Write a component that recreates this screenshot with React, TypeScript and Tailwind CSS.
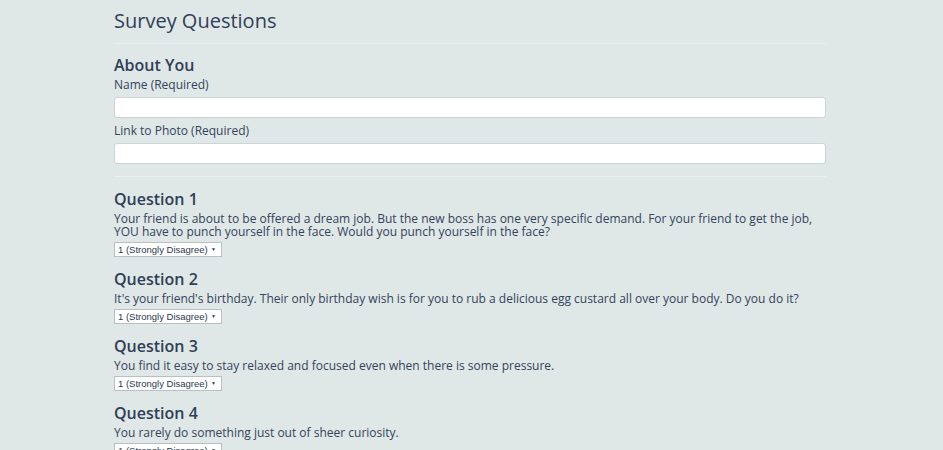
import React from "react";

const questions = [
  "Your friend is about to be offered a dream job. But the new boss has one very specific demand. For your friend to get the job, YOU have to punch yourself in the face. Would you punch yourself in the face?",
  "It's your friend's birthday. Their only birthday wish is for you to rub a delicious egg custard all over your body. Do you do it?",
  "You find it easy to stay relaxed and focused even when there is some pressure.",
  "You rarely do something just out of sheer curiosity.",
];

function Choice() {
  return (
    <div className="relative mt-[4px] w-[108px] h-[15px]">
      <select className="appearance-none block w-full h-full bg-white border border-[#b9bfc4] pl-[3px] font-['Liberation_Sans',Arial,sans-serif] text-[9.5px] leading-[12px] text-[#2c3a4d] rounded-none">
        <option>1 (Strongly Disagree)</option>
        <option>2</option>
        <option>3</option>
        <option>4</option>
        <option>5 (Strongly Agree)</option>
      </select>
      <span className="absolute right-[6px] top-0 h-full flex items-center text-[5px] text-[#2c3a4d] pointer-events-none">▼</span>
    </div>
  );
}

export default function App() {
  return (
    <div className="h-[450px] overflow-hidden w-full bg-[#dfe7e7] font-['Open_Sans',Arial,sans-serif] text-[#33445c]">
      <div className="ml-[114px] w-[712px] pt-[9px]">
        <h1 className="text-[20px] leading-[24px] font-normal text-[#2f3f57]">Survey Questions</h1>
        <hr className="mt-[10px] border-t border-[#e9eeee]" />

        <h2 className="mt-[11px] text-[16px] leading-[20px] font-semibold text-[#2f3f57]">About You</h2>
        <label className="block mt-[2px] text-[12px] leading-[15px]">Name (Required)</label>
        <input className="block mt-[5px] w-full h-[21px] bg-white border border-[#cdd3d6] rounded-[3px]" />
        <label className="block mt-[5px] text-[12px] leading-[15px]">Link to Photo (Required)</label>
        <input className="block mt-[5px] w-full h-[21px] bg-white border border-[#cdd3d6] rounded-[3px]" />
        <hr className="mt-[12px] border-t border-[#e9eeee]" />

        <div className="pt-[12px]">
          {questions.map((q, i) => (
            <div key={i} className="mb-[12px]">
              <h3 className="text-[16px] leading-[20px] font-semibold text-[#2f3f57]">Question {i + 1}</h3>
              <p className="mt-[3px] text-[12px] leading-[13px]">{q}</p>
              <Choice />
            </div>
          ))}
        </div>
      </div>
    </div>
  );
}
